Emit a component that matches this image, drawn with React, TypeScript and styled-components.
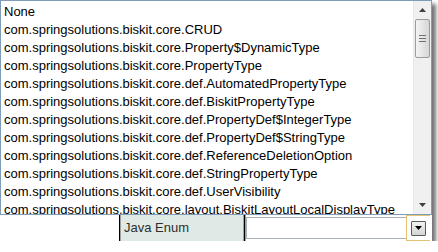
import styled, { createGlobalStyle } from "styled-components";

const GlobalStyle = createGlobalStyle`
    html, body {
        margin: 0;
        padding: 0;
        background: #ffffff;
    }
    body {
        font-family: "Liberation Sans", Arial, sans-serif;
    }
`;

const items: string[] = [
    "None",
    "com.springsolutions.biskit.core.CRUD",
    "com.springsolutions.biskit.core.Property$DynamicType",
    "com.springsolutions.biskit.core.PropertyType",
    "com.springsolutions.biskit.core.def.AutomatedPropertyType",
    "com.springsolutions.biskit.core.def.BiskitPropertyType",
    "com.springsolutions.biskit.core.def.PropertyDef$IntegerType",
    "com.springsolutions.biskit.core.def.PropertyDef$StringType",
    "com.springsolutions.biskit.core.def.ReferenceDeletionOption",
    "com.springsolutions.biskit.core.def.StringPropertyType",
    "com.springsolutions.biskit.core.def.UserVisibility",
    "com.springsolutions.biskit.core.layout.BiskitLayoutLocalDisplayType",
];

const Frame = styled.div`
    width: 432px;
    display: flex;
    flex-direction: column;
    background: #ffffff;
    box-shadow: 4px 4px 4px rgba(0, 0, 0, 0.55);
`;

const ListBox = styled.div`
    height: 215px;
    box-sizing: border-box;
    border: 1px solid #7f9db9;
    display: flex;
    background: #ffffff;
`;

const Items = styled.div`
    flex: 1;
    overflow: hidden;
    padding: 2px 0 0 3px;
`;

const Item = styled.div`
    height: 18px;
    line-height: 18px;
    font-size: 13px;
    color: #000000;
    white-space: nowrap;
`;

const ScrollBar = styled.div`
    width: 17px;
    display: flex;
    flex-direction: column;
    background: #f0f0f0;
    border-left: 1px solid #e8e8e8;
`;

const ArrowButton = styled.div`
    height: 18px;
    display: flex;
    align-items: center;
    justify-content: center;
`;

const Thumb = styled.div`
    height: 39px;
    margin: 0 1px;
    box-sizing: border-box;
    border: 1px solid #9b9b9b;
    border-radius: 2px;
    background: linear-gradient(to right, #f4f4f4, #e2e2e2 60%, #d6d6d6);
    display: flex;
    align-items: center;
    justify-content: center;
`;

const Track = styled.div`
    flex: 1;
`;

const Footer = styled.div`
    height: 26px;
    display: flex;
`;

const Spacer = styled.div`
    width: 119px;
`;

const TypeCell = styled.div`
    width: 126px;
    box-sizing: border-box;
    border-left: 1px solid #000000;
    border-right: 1px solid #000000;
    box-shadow: inset 1px 0 0 #a0a0a0, inset -1px 0 0 #a0a0a0;
    background: #dfeae6;
    font-size: 13px;
    color: #2e2e2e;
    padding-left: 4px;
    line-height: 26px;
`;

const SelectBox = styled.div`
    flex: 1;
    display: flex;
    padding: 2px 2px 2px 1px;
    box-shadow: inset 1px 0 0 #a0a0a0;
`;

const SelectField = styled.div`
    flex: 1;
    box-sizing: border-box;
    border: 1px solid #a7aeb6;
    border-right: none;
    background: #ffffff;
`;

const SelectButton = styled.div`
    width: 24px;
    box-sizing: border-box;
    border: 1px solid #e3c270;
    border-right: none;
    display: flex;
    align-items: center;
    justify-content: center;
    background: #ffffff;
    margin: -2px 0;
`;

const DropIcon = styled.div`
    width: 15px;
    height: 15px;
    box-sizing: border-box;
    border: 1px solid #5a5a5a;
    border-radius: 1px;
    background: linear-gradient(#f2f2f2, #d4d4d4);
    display: flex;
    align-items: center;
    justify-content: center;
`;

function Grip() {
    return (
        <svg width="7" height="7" viewBox="0 0 7 7">
            <rect x="0" y="0" width="7" height="1" fill="#707070" />
            <rect x="0" y="3" width="7" height="1" fill="#707070" />
            <rect x="0" y="6" width="7" height="1" fill="#707070" />
        </svg>
    );
}

function Triangle({ up, color }: { up?: boolean; color: string }) {
    return (
        <svg width="7" height="4" viewBox="0 0 7 4">
            <polygon points={up ? "3.5,0 7,4 0,4" : "0,0 7,0 3.5,4"} fill={color} />
        </svg>
    );
}

export default function App() {
    return (
        <>
            <GlobalStyle />
            <Frame>
                <ListBox>
                    <Items>
                        {items.map((name) => (
                            <Item key={name}>{name}</Item>
                        ))}
                    </Items>
                    <ScrollBar>
                        <ArrowButton>
                            <Triangle up color="#404040" />
                        </ArrowButton>
                        <Thumb>
                            <Grip />
                        </Thumb>
                        <Track />
                        <ArrowButton>
                            <Triangle color="#404040" />
                        </ArrowButton>
                    </ScrollBar>
                </ListBox>
                <Footer>
                    <Spacer />
                    <TypeCell>Java Enum</TypeCell>
                    <SelectBox>
                        <SelectField />
                        <SelectButton>
                            <DropIcon>
                                <Triangle color="#000000" />
                            </DropIcon>
                        </SelectButton>
                    </SelectBox>
                </Footer>
            </Frame>
        </>
    );
}
